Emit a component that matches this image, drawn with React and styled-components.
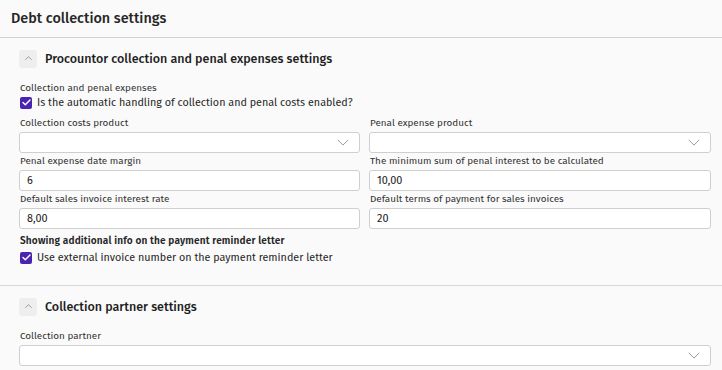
import React from 'react'
import styled, { createGlobalStyle } from 'styled-components'

const GlobalStyle = createGlobalStyle`
  html, body {
    margin: 0;
    padding: 0;
    background: #fafafa;
  }
  body {
    font-family: 'Fira Sans', Lato, 'Noto Sans', sans-serif;
    color: #2b2b2b;
  }
`

const Page = styled.div`
  width: 722px;
  height: 370px;
  overflow: hidden;
  background: #fafafa;
`

const PageHeader = styled.div`
  height: 37px;
  padding: 0 11px;
  display: flex;
  align-items: center;
  font-size: 14.4px;
  font-weight: 500;
  color: #262626;
  border-bottom: 1px solid #d2d2d2;
`

const Section = styled.section`
  padding: 11px 11px 20px 19px;
  border-bottom: ${({ last }) => (last ? 'none' : '1px solid #d6d6d6')};
`

const SectionHead = styled.div`
  display: flex;
  align-items: center;
  gap: 8px;
  height: 19px;
  margin-bottom: ${({ gap }) => gap || 10}px;
`

const ToggleButton = styled.button`
  width: 18px;
  height: 18px;
  border: none;
  border-radius: 3px;
  background: #eeeeee;
  padding: 0;
  display: flex;
  align-items: center;
  justify-content: center;
  cursor: pointer;
`

const SectionTitle = styled.h3`
  margin: 0;
  font-size: 12.5px;
  font-weight: 500;
  color: #1f1f1f;
`

const Label = styled.div`
  font-size: ${({ bold }) => (bold ? 10.1 : 9.9)}px;
  line-height: ${({ tight }) => (tight ? 14 : 17)}px;
  margin-top: ${({ mt }) => mt || 0}px;
  color: ${({ bold }) => (bold ? '#262626' : '#333')};
  padding-left: 1px;
  font-weight: ${({ bold }) => (bold ? 600 : 400)};
  letter-spacing: ${({ bold }) => (bold ? '0.15px' : 'normal')};
`

const CheckRow = styled.label`
  display: flex;
  align-items: center;
  gap: 5px;
  height: 15px;
  font-size: 10.75px;
  color: #262626;
  padding-left: 1px;
`

const Box = styled.span`
  width: 12px;
  height: 12px;
  border-radius: 2px;
  background: #4a23b0;
  display: flex;
  align-items: center;
  justify-content: center;
`

const Grid = styled.div`
  display: grid;
  grid-template-columns: 341px 1fr;
  column-gap: 9px;
  margin-top: 5px;
`

const Field = styled.div`
  display: flex;
  flex-direction: column;
`

const Input = styled.div`
  height: 19px;
  border: 1px solid #cfcfcf;
  border-radius: 3px;
  background: #fff;
  display: flex;
  align-items: center;
  justify-content: space-between;
  padding: 0 10px 0 7px;
  font-size: 10.9px;
  color: #222;
`

const Chevron = ({ dir = 'down', color = '#9a9a9a', size = 12 }) => (
  <svg width={size} height={size * 0.6} viewBox="0 0 12 7" fill="none">
    <path
      d={dir === 'down' ? 'M1 1l5 5 5-5' : 'M1 6l5-5 5 5'}
      stroke={color}
      strokeWidth="1"
      strokeLinecap="round"
      strokeLinejoin="round"
    />
  </svg>
)

const Check = () => (
  <svg width="9" height="7" viewBox="0 0 9 7" fill="none">
    <path d="M1 3.5l2.3 2.3L8 1" stroke="#fff" strokeWidth="1.4" strokeLinecap="round" strokeLinejoin="round" />
  </svg>
)

function Select({ value }) {
  return (
    <Input>
      <span>{value}</span>
      <Chevron />
    </Input>
  )
}

function Checkbox({ children }) {
  return (
    <CheckRow>
      <Box>
        <Check />
      </Box>
      {children}
    </CheckRow>
  )
}

function SectionHeader({ title, gap }) {
  return (
    <SectionHead gap={gap}>
      <ToggleButton>
        <Chevron dir="up" color="#666" size={7} />
      </ToggleButton>
      <SectionTitle>{title}</SectionTitle>
    </SectionHead>
  )
}

export default function App() {
  return (
    <Page>
      <GlobalStyle />
      <PageHeader>Debt collection settings</PageHeader>
      <Section>
        <SectionHeader title="Procountor collection and penal expenses settings" gap={13} />
        <Label tight>Collection and penal expenses</Label>
        <Checkbox>Is the automatic handling of collection and penal costs enabled?</Checkbox>
        <Grid>
          <Field>
            <Label>Collection costs product</Label>
            <Select />
          </Field>
          <Field>
            <Label>Penal expense product</Label>
            <Select />
          </Field>
          <Field>
            <Label>Penal expense date margin</Label>
            <Input>6</Input>
          </Field>
          <Field>
            <Label>The minimum sum of penal interest to be calculated</Label>
            <Input>10,00</Input>
          </Field>
          <Field>
            <Label>Default sales invoice interest rate</Label>
            <Input>8,00</Input>
          </Field>
          <Field>
            <Label>Default terms of payment for sales invoices</Label>
            <Input>20</Input>
          </Field>
        </Grid>
        <Label bold mt={4}>Showing additional info on the payment reminder letter</Label>
        <Checkbox>Use external invoice number on the payment reminder letter</Checkbox>
      </Section>
      <Section last>
        <SectionHeader title="Collection partner settings" gap={12} />
        <Field>
          <Label>Collection partner</Label>
          <Select />
        </Field>
      </Section>
    </Page>
  )
}
